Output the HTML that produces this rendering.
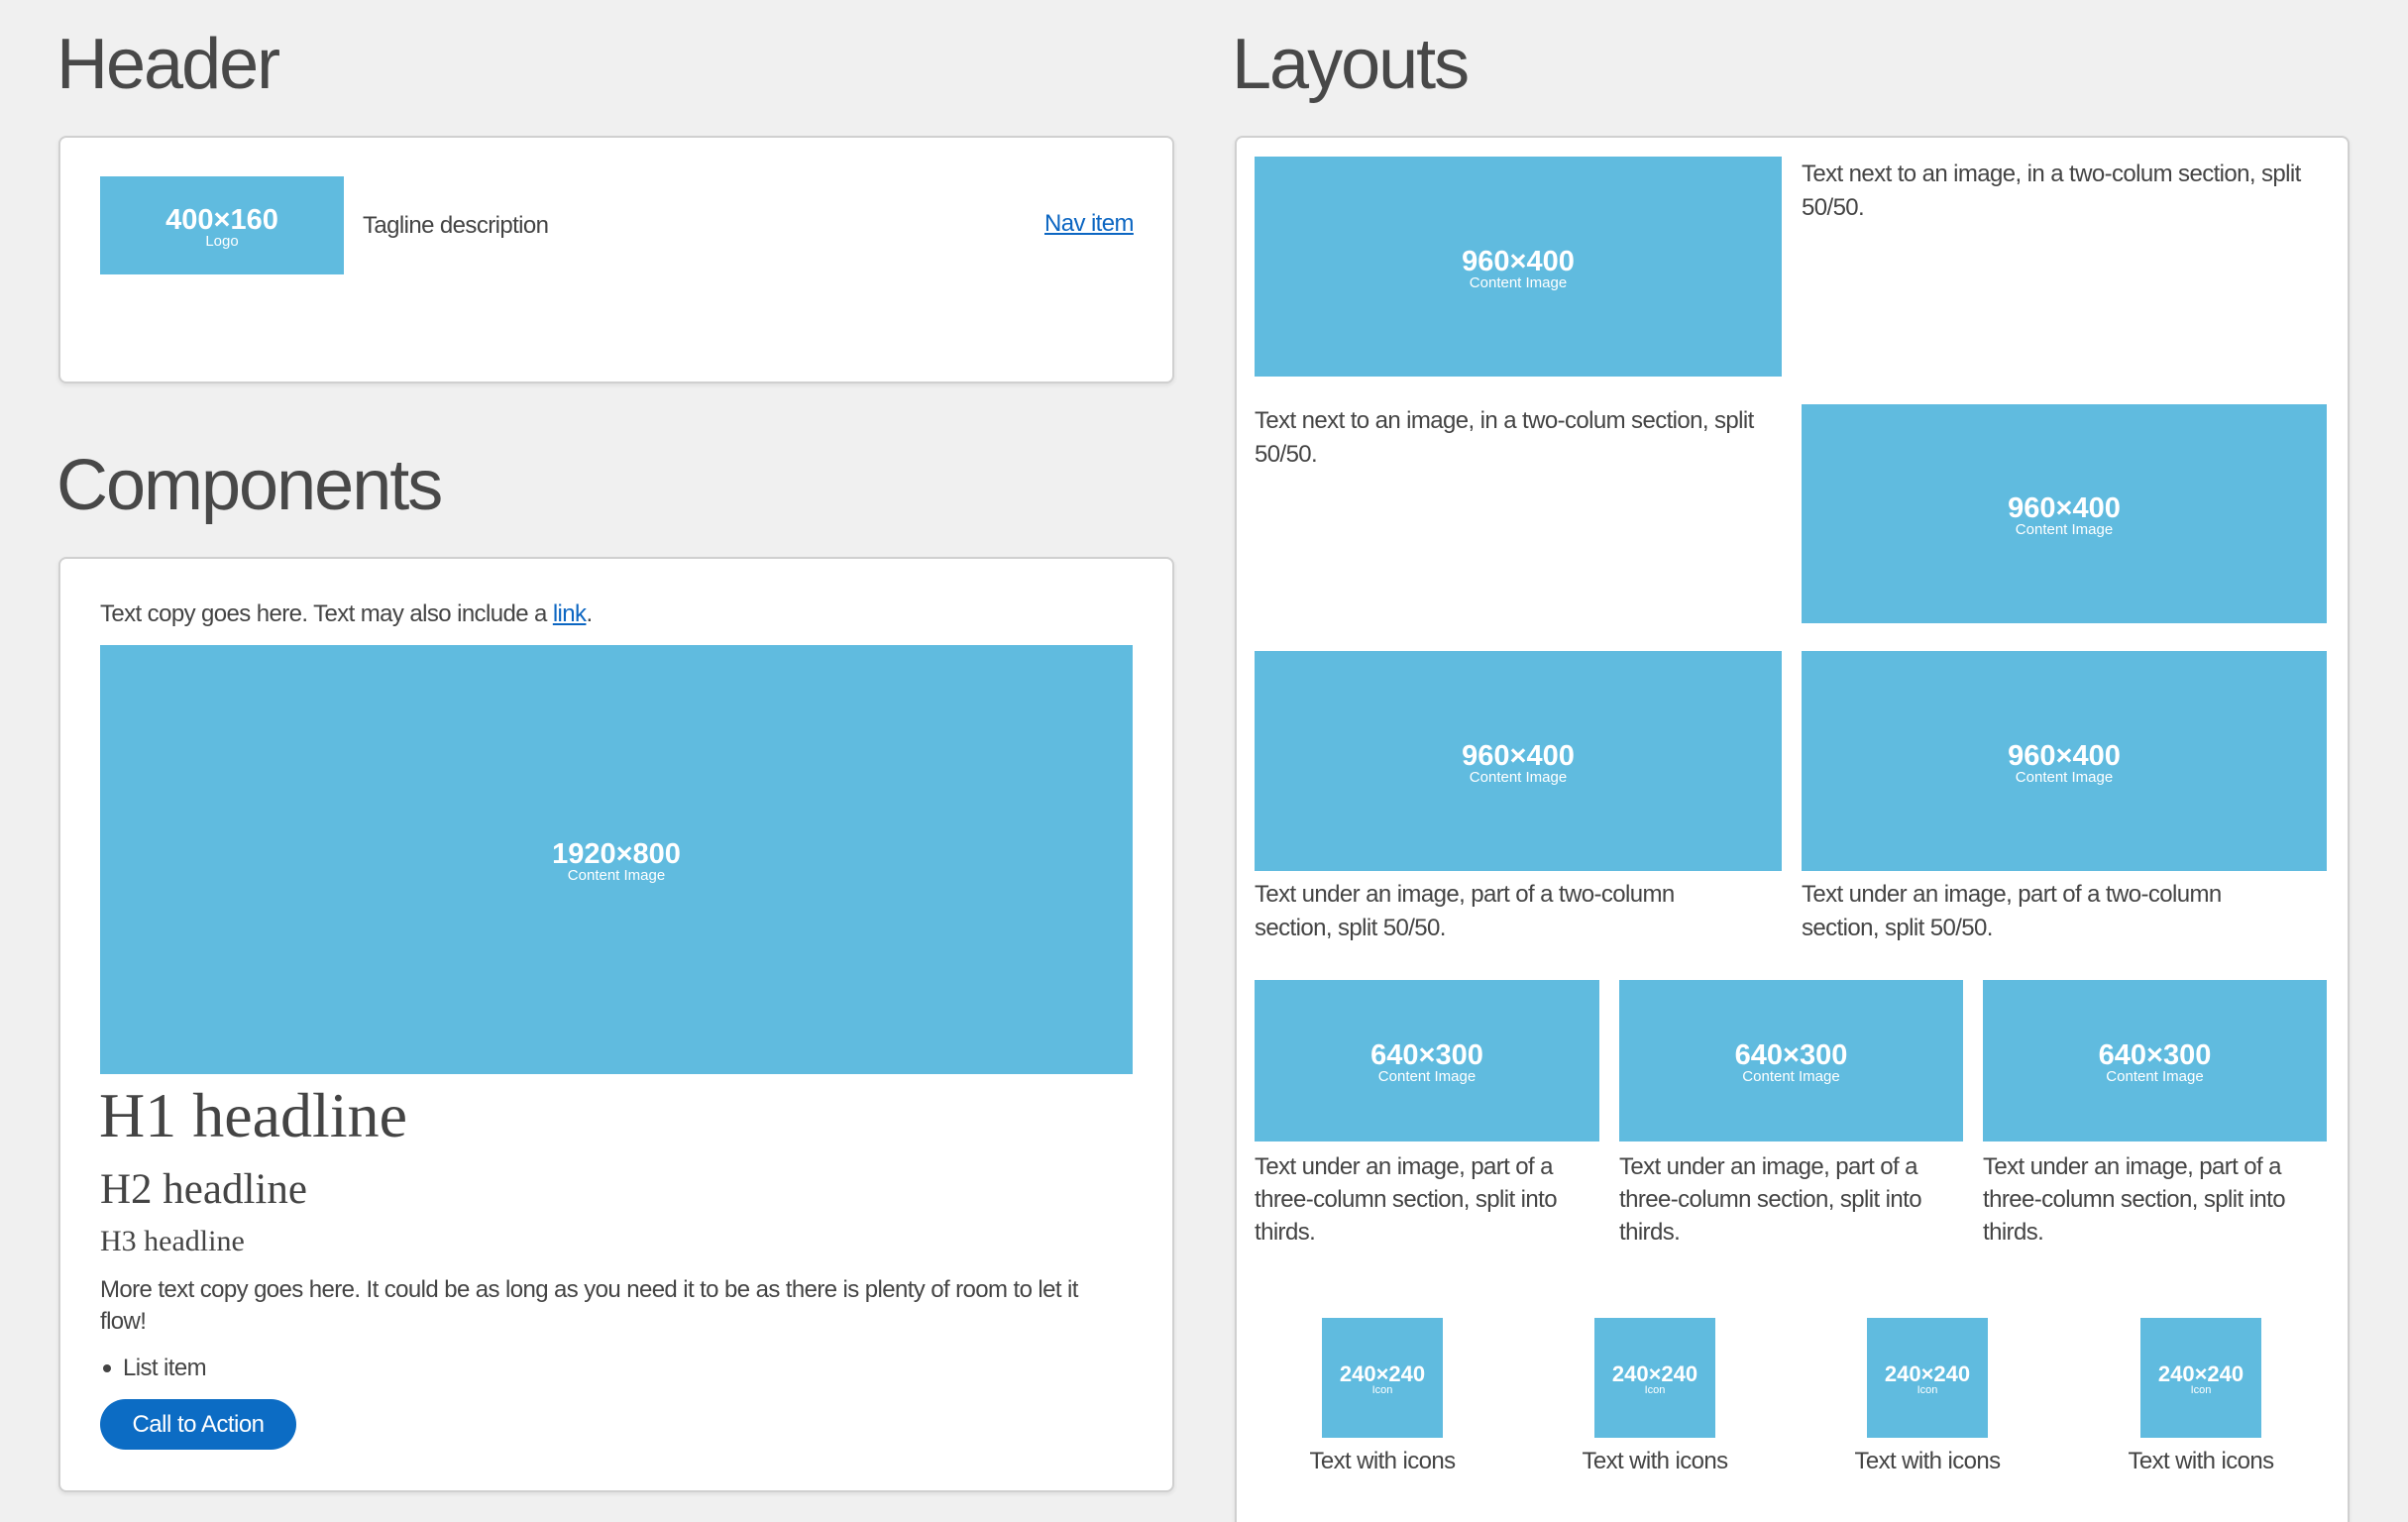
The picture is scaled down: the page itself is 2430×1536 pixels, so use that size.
<!DOCTYPE html>
<html><head><meta charset="utf-8"><style>
*{margin:0;padding:0;box-sizing:border-box}
html{width:2430px;height:1536px;overflow:hidden}
body{width:2430px;height:1536px;background:#f0f0f0;position:relative;overflow:hidden;font-family:"Liberation Sans",sans-serif;color:#444}
.a{position:absolute}
.t{font-size:72px;line-height:1;letter-spacing:-2px;color:#484848}
.card{position:absolute;background:#fff;border:2px solid #d0d0d0;border-radius:8px;box-shadow:0 2px 4px rgba(0,0,0,.08)}
.p{font-size:24px;line-height:32px;letter-spacing:-0.6px;white-space:nowrap;color:#444}
.img{position:absolute;background:#60bbdf;display:flex;flex-direction:column;align-items:center;justify-content:center;color:#fff;text-align:center;padding-top:4px}
.img b{font-size:29px;line-height:28px;letter-spacing:0}
.img span{font-size:15px;line-height:15px}
.ic b{font-size:22px;line-height:22px}
.ic span{font-size:11px;line-height:11px}
.serif{font-family:"Liberation Serif",serif;color:#444;line-height:1;white-space:nowrap}
a{color:#0c66c2}
.lab{position:absolute;width:240px;text-align:center;font-size:24px;letter-spacing:-0.6px;line-height:32px}
</style></head><body>
<div class="a t" style="left:57px;top:29px">Header</div>
<div class="card" style="left:59px;top:137px;width:1126px;height:250px"></div>
<div class="img" style="left:101px;top:178px;width:246px;height:99px"><b>400×160</b><span>Logo</span></div>
<div class="a p" style="left:366px;top:212px">Tagline description</div>
<div class="a p" style="left:1054px;top:210px"><a href="#">Nav item</a></div>

<div class="a t" style="left:57px;top:454px">Components</div>
<div class="card" style="left:59px;top:562px;width:1126px;height:944px"></div>
<div class="a p" style="left:101px;top:604px">Text copy goes here. Text may also include a <a href="#">link</a>.</div>
<div class="img" style="left:101px;top:651px;width:1042px;height:433px"><b>1920×800</b><span>Content Image</span></div>
<div class="a serif" style="left:100px;top:1094px;font-size:64px">H1 headline</div>
<div class="a serif" style="left:101px;top:1179px;font-size:43px">H2 headline</div>
<div class="a serif" style="left:101px;top:1238px;font-size:30px">H3 headline</div>
<div class="a p" style="left:101px;top:1286px">More text copy goes here. It could be as long as you need it to be as there is plenty of room to let it<br>flow!</div>
<div class="a" style="left:104px;top:1377px;width:8px;height:8px;border-radius:50%;background:#444"></div>
<div class="a p" style="left:124px;top:1365px">List item</div>
<div class="a" style="left:101px;top:1412px;width:198px;height:51px;border-radius:26px;background:#0c6cc4;color:#fff;font-size:24px;letter-spacing:-0.5px;line-height:51px;text-align:center">Call to Action</div>

<div class="a t" style="left:1243px;top:29px">Layouts</div>
<div class="card" style="left:1246px;top:137px;width:1125px;height:1420px"></div>
<div class="img" style="left:1266px;top:158px;width:532px;height:222px"><b>960×400</b><span>Content Image</span></div>
<div class="a p" style="left:1818px;top:159px;line-height:34px">Text next to an image, in a two-colum section, split<br>50/50.</div>
<div class="a p" style="left:1266px;top:408px;line-height:34px">Text next to an image, in a two-colum section, split<br>50/50.</div>
<div class="img" style="left:1818px;top:408px;width:530px;height:221px"><b>960×400</b><span>Content Image</span></div>
<div class="img" style="left:1266px;top:657px;width:532px;height:222px"><b>960×400</b><span>Content Image</span></div>
<div class="img" style="left:1818px;top:657px;width:530px;height:222px"><b>960×400</b><span>Content Image</span></div>
<div class="a p" style="left:1266px;top:886px;line-height:34px">Text under an image, part of a two-column<br>section, split 50/50.</div>
<div class="a p" style="left:1818px;top:886px;line-height:34px">Text under an image, part of a two-column<br>section, split 50/50.</div>
<div class="img" style="left:1266px;top:989px;width:348px;height:163px"><b>640×300</b><span>Content Image</span></div>
<div class="img" style="left:1634px;top:989px;width:347px;height:163px"><b>640×300</b><span>Content Image</span></div>
<div class="img" style="left:2001px;top:989px;width:347px;height:163px"><b>640×300</b><span>Content Image</span></div>
<div class="a p" style="left:1266px;top:1161px;line-height:33px">Text under an image, part of a<br>three-column section, split into<br>thirds.</div>
<div class="a p" style="left:1634px;top:1161px;line-height:33px">Text under an image, part of a<br>three-column section, split into<br>thirds.</div>
<div class="a p" style="left:2001px;top:1161px;line-height:33px">Text under an image, part of a<br>three-column section, split into<br>thirds.</div>
<div class="img ic" style="left:1334px;top:1330px;width:122px;height:121px"><b>240×240</b><span>Icon</span></div>
<div class="img ic" style="left:1609px;top:1330px;width:122px;height:121px"><b>240×240</b><span>Icon</span></div>
<div class="img ic" style="left:1884px;top:1330px;width:122px;height:121px"><b>240×240</b><span>Icon</span></div>
<div class="img ic" style="left:2160px;top:1330px;width:122px;height:121px"><b>240×240</b><span>Icon</span></div>
<div class="lab" style="left:1275px;top:1459px">Text with icons</div>
<div class="lab" style="left:1550px;top:1459px">Text with icons</div>
<div class="lab" style="left:1825px;top:1459px">Text with icons</div>
<div class="lab" style="left:2101px;top:1459px">Text with icons</div>
</body></html>
